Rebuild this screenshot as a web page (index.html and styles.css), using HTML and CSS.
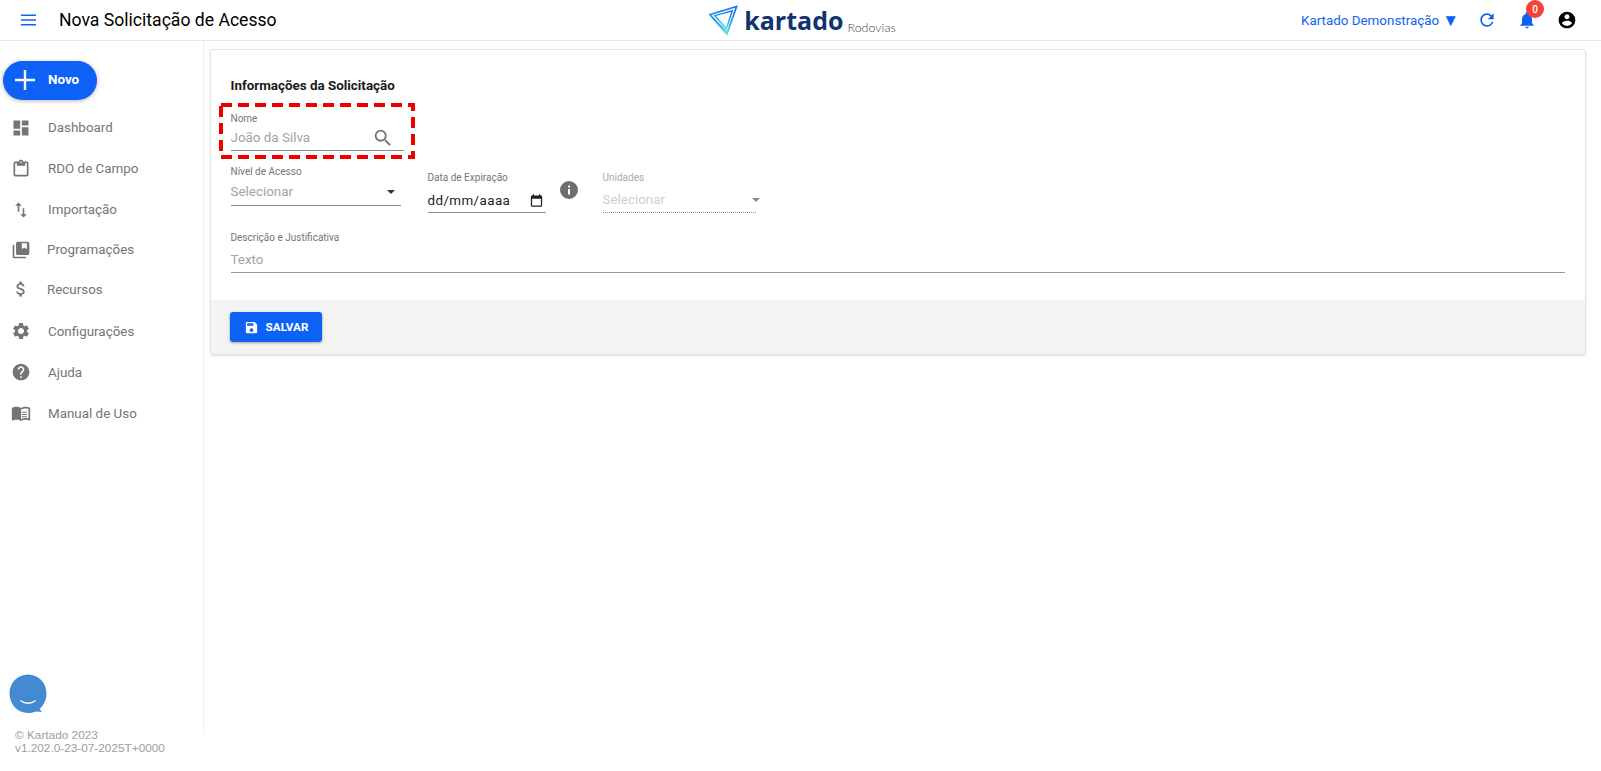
FILE: index.html
```html
<!DOCTYPE html>
<html>
<head>
<title>Nova Solicitação de Acesso</title>
<link rel="stylesheet" href="styles.css">
</head>
<body>
  <div class="topbar">
    <div class="top-left">
      <svg class="burger" viewBox="0 0 16 12"><path d="M0 1h16M0 6h16M0 11h16"/></svg>
      <h1>Nova Solicitação de Acesso</h1>
    </div>
    <div class="logo">
      <svg class="logo-mark" viewBox="0 0 30 30">
        <defs>
          <linearGradient id="lg" x1="0.7" y1="0" x2="0.5" y2="1">
            <stop offset="0" stop-color="#1c78e6"/>
            <stop offset="0.6" stop-color="#30a8ea"/>
            <stop offset="1" stop-color="#5fe6d4"/>
          </linearGradient>
        </defs>
        <path d="M1 9.500 28.500 1 18.500 29.500Z" fill="none" stroke="url(#lg)" stroke-width="1.800"/>
        <path d="M6 10.500 24 5.500 18 24Z" fill="none" stroke="url(#lg)" stroke-width="1.500"/>
        <path d="M3.500 12.500 18.500 27" fill="none" stroke="url(#lg)" stroke-width="1.200"/>
      </svg>
      <span class="logo-name">kartado</span>
      <span class="logo-sub">Rodovias</span>
    </div>
    <div class="top-right">
      <span class="account">Kartado Demonstração <span class="arrow">▼</span></span>
      <svg class="top-icon blue" viewBox="0 0 24 24"><path d="M17.650 6.350A7.958 7.958 0 0 0 12 4c-4.420 0-7.990 3.580-7.990 8s3.570 8 7.990 8c3.730 0 6.840-2.550 7.730-6h-2.080A5.990 5.990 0 0 1 12 18c-3.310 0-6-2.690-6-6s2.690-6 6-6c1.660 0 3.140.69 4.220 1.780L13 11h7V4l-2.350 2.350z"/></svg>
      <div class="bell">
        <svg class="top-icon blue" viewBox="0 0 24 24"><path d="M12 22c1.100 0 2-.9 2-2h-4a2 2 0 0 0 2 2zm6-6v-5c0-3.070-1.640-5.640-4.500-6.320V4a1.500 1.500 0 0 0-3 0v.68C7.630 5.360 6 7.920 6 11v5l-2 2v1h16v-1l-2-2z"/></svg>
        <span class="badge">0</span>
      </div>
      <svg class="top-icon" viewBox="0 0 24 24"><path d="M12 2C6.480 2 2 6.480 2 12s4.480 10 10 10 10-4.480 10-10S17.520 2 12 2zm0 3c1.660 0 3 1.340 3 3s-1.340 3-3 3-3-1.340-3-3 1.340-3 3-3zm0 14.200a7.200 7.200 0 0 1-6-3.220c.03-1.990 4-3.080 6-3.080 1.990 0 5.970 1.090 6 3.080a7.200 7.200 0 0 1-6 3.220z"/></svg>
    </div>
  </div>

  <div class="main">
    <div class="sidebar">
      <div class="nav">
        <button class="novo">
          <svg viewBox="0 0 24 24"><path d="M12 2v20M2 12h20"/></svg>
          <span>Novo</span>
        </button>
        <a class="nav-item">
          <svg viewBox="0 0 24 24"><path d="M3 13h8V3H3v10zm0 8h8v-6H3v6zm10 0h8V11h-8v10zm0-18v6h8V3h-8z"/></svg>
          <span>Dashboard</span>
        </a>
        <a class="nav-item">
          <svg viewBox="0 0 24 24"><path d="M19 3h-4.180C14.400 1.840 13.300 1 12 1s-2.400.84-2.820 2H5c-1.100 0-2 .9-2 2v14c0 1.100.9 2 2 2h14c1.100 0 2-.9 2-2V5c0-1.100-.9-2-2-2zm-7 0c.55 0 1 .45 1 1s-.45 1-1 1-1-.45-1-1 .45-1 1-1zm7 16H5V5h2v3h10V5h2v14z"/></svg>
          <span>RDO de Campo</span>
        </a>
        <a class="nav-item">
          <svg viewBox="0 0 24 24"><path d="M16 17.010V10h-2v7.010h-3L15 21l4-3.990h-3zM9 3 5 6.990h3V14h2V6.990h3L9 3z"/></svg>
          <span>Importação</span>
        </a>
        <a class="nav-item tight">
          <svg viewBox="0 0 24 24"><path d="M4 6H2v14c0 1.100.9 2 2 2h14v-2H4V6zm16-4H8c-1.100 0-2 .9-2 2v12c0 1.100.9 2 2 2h12c1.100 0 2-.9 2-2V4c0-1.100-.9-2-2-2zm-1 9-3-2-3 2V4h6v7z" fill-rule="evenodd"/></svg>
          <span>Programações</span>
        </a>
        <a class="nav-item tight">
          <svg viewBox="0 0 24 24"><path d="M11.800 10.900c-2.270-.59-3-1.200-3-2.150 0-1.090 1.010-1.850 2.700-1.850 1.780 0 2.440.85 2.500 2.100h2.210c-.07-1.720-1.120-3.300-3.210-3.810V3h-3v2.160c-1.940.42-3.500 1.680-3.500 3.610 0 2.310 1.910 3.460 4.700 4.130 2.500.6 3 1.480 3 2.410 0 .69-.49 1.790-2.700 1.790-2.060 0-2.870-.92-2.980-2.100h-2.200c.12 2.190 1.760 3.420 3.680 3.830V21h3v-2.150c1.950-.37 3.500-1.500 3.500-3.550 0-2.840-2.430-3.810-4.700-4.400z"/></svg>
          <span>Recursos</span>
        </a>
        <a class="nav-item">
          <svg viewBox="0 0 24 24"><path d="M19.140 12.940c.04-.3.060-.61.060-.94 0-.32-.02-.64-.07-.94l2.030-1.580a.49.490 0 0 0 .12-.61l-1.920-3.320a.488.488 0 0 0-.59-.22l-2.390.96c-.5-.38-1.030-.7-1.620-.94l-.36-2.540a.484.484 0 0 0-.48-.41h-3.840c-.24 0-.43.170-.47.410l-.36 2.540c-.59.24-1.130.57-1.620.94l-2.390-.96c-.22-.08-.47 0-.59.22L2.740 8.870c-.12.210-.08.47.12.61l2.030 1.580c-.05.3-.09.63-.09.94s.02.64.07.94l-2.030 1.580a.49.490 0 0 0-.12.61l1.920 3.320c.12.220.37.290.59.220l2.390-.96c.5.380 1.030.7 1.620.94l.36 2.540c.05.240.24.410.48.410h3.840c.24 0 .44-.17.47-.41l.36-2.540c.59-.24 1.130-.56 1.620-.94l2.390.96c.22.080.47 0 .59-.22l1.920-3.320c.12-.22.070-.47-.12-.61l-2.010-1.580zM12 15.600A3.610 3.610 0 0 1 8.400 12c0-1.980 1.620-3.600 3.600-3.600s3.600 1.620 3.600 3.600-1.620 3.600-3.600 3.600z"/></svg>
          <span>Configurações</span>
        </a>
        <a class="nav-item">
          <svg viewBox="0 0 24 24"><path d="M12 2C6.480 2 2 6.480 2 12s4.480 10 10 10 10-4.480 10-10S17.520 2 12 2zm1 17h-2v-2h2v2zm2.070-7.750-.9.920C13.450 12.900 13 13.500 13 15h-2v-.5c0-1.100.45-2.100 1.170-2.830l1.240-1.260c.37-.36.590-.86.590-1.410 0-1.100-.9-2-2-2s-2 .9-2 2H8c0-2.210 1.790-4 4-4s4 1.790 4 4c0 .88-.36 1.680-.93 2.250z"/></svg>
          <span>Ajuda</span>
        </a>
        <a class="nav-item">
          <svg viewBox="0 0 24 24"><path d="M21 5c-1.110-.35-2.330-.5-3.500-.5-1.950 0-4.050.4-5.500 1.500-1.450-1.100-3.550-1.500-5.500-1.500S2.450 4.900 1 6v14.650c0 .25.250.5.500.5.100 0 .15-.05.250-.05C3.100 20.450 5.050 20 6.500 20c1.950 0 4.050.4 5.500 1.500 1.350-.85 3.800-1.500 5.500-1.500 1.650 0 3.350.3 4.750 1.050.1.050.15.050.25.050.25 0 .5-.25.5-.5V6c-.6-.45-1.250-.75-2-1zm0 13.500c-1.100-.35-2.300-.5-3.500-.5-1.700 0-4.150.65-5.500 1.500V8c1.350-.85 3.800-1.500 5.500-1.500 1.200 0 2.400.15 3.500.5v11.500zM13 10.500h6v1.200h-6zm0 2.700h6v1.200h-6zm0 2.700h6v1.200h-6z"/></svg>
          <span>Manual de Uso</span>
        </a>
      </div>
      <svg class="chat" viewBox="0 0 38 40">
        <path d="M19 .5C8.500.5.500 8.800.500 19.500S8.500 39 19 39c3.500 0 6-.7 8-1.500l6 .5-2.500-3C35 31 37.500 25.500 37.500 19.500 37.500 8.800 29.500.5 19 .5Z" fill="#448ad3"/>
        <path d="M12 27c4 3 10 3 14 0" fill="none" stroke="#fff" stroke-width="1.500" stroke-linecap="round"/>
      </svg>
    </div>

    <div class="content">
      <div class="card">
        <div class="card-body">
          <h2>Informações da Solicitação</h2>

          <div class="field nome">
            <label>Nome</label>
            <div class="value placeholder">
              <span>João da Silva</span>
              <svg class="search" viewBox="0 0 24 24"><path d="M15.500 14h-.79l-.28-.27A6.471 6.471 0 0 0 16 9.500 6.500 6.500 0 1 0 9.500 16c1.610 0 3.090-.59 4.230-1.570l.27.280v.79l5 4.990L20.490 19l-4.990-5zm-6 0C7.010 14 5 11.990 5 9.500S7.010 5 9.500 5 14 7.010 14 9.500 11.990 14 9.500 14z"/></svg>
            </div>
            <svg class="highlight" viewBox="0 0 196 56"><rect x="2" y="2" width="192" height="52"/></svg>
          </div>

          <div class="row">
            <div class="field nivel">
              <label>Nível de Acesso</label>
              <div class="value placeholder">
                <span>Selecionar</span>
                <i class="caret"></i>
              </div>
            </div>
            <div class="field data">
              <label>Data de Expiração</label>
              <div class="value">
                <span>dd/mm/aaaa</span>
                <svg class="cal" viewBox="0 0 24 24"><path d="M19 4h-1V2h-2v2H8V2H6v2H5a2 2 0 0 0-2 2v14a2 2 0 0 0 2 2h14a2 2 0 0 0 2-2V6a2 2 0 0 0-2-2zm0 16H5V9h14v11z"/></svg>
              </div>
            </div>
            <svg class="info" viewBox="0 0 20 20"><path d="M10 1a9 9 0 1 0 0 18 9 9 0 0 0 0-18zm1 13.500H9V9h2v5.500zM11 7.500H9v-2h2v2z" fill-rule="evenodd"/></svg>
            <div class="field unidades">
              <label>Unidades</label>
              <div class="value placeholder">
                <span>Selecionar</span>
                <i class="caret"></i>
              </div>
            </div>
          </div>

          <div class="field descricao">
            <label>Descrição e Justificativa</label>
            <div class="value placeholder"><span>Texto</span></div>
          </div>
        </div>

        <div class="card-foot">
          <button class="salvar">
            <svg viewBox="0 0 24 24"><path d="M17 3H5a2 2 0 0 0-2 2v14c0 1.100.9 2 2 2h14c1.100 0 2-.9 2-2V7l-4-4zm-5 16c-1.660 0-3-1.340-3-3s1.340-3 3-3 3 1.340 3 3-1.340 3-3 3zm3-10H5V5h10v4z"/></svg>
            <span>SALVAR</span>
          </button>
        </div>
      </div>
    </div>
  </div>

  <div class="version">© Kartado 2023<br>v1.202.0-23-07-2025T+0000</div>
</body>
</html>
```

FILE: styles.css
```css
* {
  box-sizing: border-box;
}

html, body {
  height: 771px;
  overflow: hidden;
}

body {
  margin: 0;
  background: #fff;
  font-family: Roboto, sans-serif;
  color: #000;
}

/* Top bar */
.topbar {
  height: 41px;
  border-bottom: 1px solid #e6e6e6;
  display: grid;
  grid-template-columns: 1fr auto 1fr;
  align-items: center;
}

.top-left {
  display: flex;
  align-items: center;
  padding-left: 21px;
}

.burger {
  width: 15px;
  height: 12px;
  stroke: #0d62f5;
  stroke-width: 1.500;
  fill: none;
  margin-right: 23px;
}

.top-left h1 {
  margin: 0;
  font-size: 17.600px;
  font-weight: 400;
}

.logo {
  display: flex;
  align-items: flex-end;
  margin-left: 4px;
}

.logo-mark {
  width: 29px;
  height: 30px;
  margin-right: 6px;
}

.logo-name {
  font-family: "Open Sans", sans-serif;
  font-weight: 700;
  font-size: 25px;
  line-height: 30px;
  color: #10346e;
}

.logo-sub {
  font-family: Lato, sans-serif;
  font-weight: 300;
  font-size: 12.500px;
  line-height: 14px;
  color: #444;
  margin-left: 4px;
}

.top-right {
  display: flex;
  align-items: center;
  justify-content: flex-end;
  padding-right: 24px;
}

.account {
  color: #0d62f5;
  font-size: 13.400px;
  margin-right: 18px;
  display: flex;
  align-items: center;
  gap: 3px;
}

.arrow {
  font-size: 17px;
  line-height: 14px;
}

.top-icon {
  width: 20px;
  height: 20px;
  display: block;
}

.top-icon.blue {
  fill: #0d62f5;
}

.bell {
  position: relative;
  margin: 0 20px 0 20px;
}

.badge {
  position: absolute;
  top: -10px;
  left: 9px;
  width: 18px;
  height: 18px;
  border-radius: 50%;
  background: #f44336;
  color: #fff;
  font-size: 10px;
  font-weight: 500;
  display: flex;
  align-items: center;
  justify-content: center;
}

/* Main area */
.main {
  display: flex;
  height: 693px;
}

.sidebar {
  width: 204px;
  border-right: 1px solid #efefef;
  display: flex;
  flex-direction: column;
  justify-content: space-between;
}

.nav {
  padding-top: 20px;
}

.novo {
  width: 94px;
  height: 39px;
  margin: 0 0 7px 3px;
  border: 0;
  border-radius: 20px;
  background: #0d62f5;
  box-shadow: 0 1px 4px rgba(0,0,0,0.3);
  color: #fff;
  font-family: Roboto, sans-serif;
  font-size: 13.400px;
  font-weight: 700;
  display: flex;
  align-items: center;
  padding: 0 0 2px 10px;
}

.novo span {
  margin-left: 1px;
}

.novo svg {
  width: 24px;
  height: 24px;
  stroke: #fff;
  stroke-width: 2.400;
  fill: none;
  margin-right: 10px;
}

.nav-item {
  display: flex;
  align-items: center;
  height: 41px;
  padding-left: 11px;
  color: #757575;
  font-size: 13.400px;
}

.nav-item.tight {
  height: 39.500px;
}

.nav-item.tight + .nav-item:not(.tight) {
  margin-top: 1.500px;
}

.nav-item svg {
  width: 20px;
  height: 20px;
  fill: #757575;
  margin-right: 17px;
}

.nav-item.tight span {
  margin-left: -1px;
}

.chat {
  width: 38px;
  height: 40px;
  margin: 0 0 20px 9px;
  display: block;
}

.content {
  flex: 1;
  padding: 8px 15px 0 6px;
}

.card {
  border: 1px solid #e3e3e3;
  border-radius: 3px;
  box-shadow: 0 1px 2px rgba(0,0,0,0.12);
  background: #fff;
}

.card-body {
  padding: 28px 20px 27px 19.500px;
}

.card-body h2 {
  margin: 0;
  font-size: 13.400px;
  font-weight: 700;
  line-height: 16px;
  color: #1a1a1a;
}

/* Form fields */
.field {
  position: relative;
}

.field label {
  display: block;
  font-size: 10px;
  line-height: 12px;
  color: #757575;
}

.value {
  display: flex;
  align-items: center;
  justify-content: space-between;
  height: 26px;
  font-size: 13.400px;
  border-bottom: 1px solid #8c8c8c;
}

.placeholder {
  color: #a3a3a3;
}

.nome {
  width: 173px;
  margin-top: 19px;
}

.highlight {
  position: absolute;
  left: -12px;
  top: -10px;
  width: 196px;
  height: 56px;
  fill: none;
  stroke: #ee0000;
  stroke-width: 4;
  stroke-dasharray: 11 6;
}

.search {
  width: 22px;
  height: 22px;
  fill: #757575;
  margin-right: 10px;
}

.row {
  display: flex;
  align-items: flex-start;
  margin-top: 15px;
}

.nivel {
  width: 170px;
}

.nivel .value {
  height: 28px;
}

.data {
  width: 118px;
  margin: 6px 0 0 27px;
}

.data .value {
  color: #212121;
  letter-spacing: 0.4px;
  height: 29px;
  padding: 4px 2px 0 0;
}

.cal {
  width: 15px;
  height: 15px;
  fill: #212121;
}

.info {
  width: 20px;
  height: 20px;
  fill: #6e6e6e;
  margin: 14px 0 0 13px;
}

.unidades {
  width: 153px;
  margin: 6px 0 0 24px;
}

.unidades label {
  color: #a8a8a8;
}

.unidades .value {
  height: 29px;
  padding-top: 3px;
  color: #cfcfcf;
  border-bottom: 1px dotted #8c8c8c;
}

.caret {
  width: 0;
  height: 0;
  border-left: 4.500px solid transparent;
  border-right: 4.500px solid transparent;
  border-top: 4.500px solid #333;
  margin-right: 6px;
}

.unidades .caret {
  border-top-color: #8c8c8c;
  margin-right: -4px;
}

.descricao {
  margin-top: 19px;
}

.descricao .value {
  height: 29px;
  padding-top: 2px;
  border-bottom: 1px solid #999;
}

.card-foot {
  background: #f4f4f4;
  height: 54px;
  padding: 12px 0 0 19px;
}

.salvar {
  width: 92px;
  height: 30px;
  border: 0;
  border-radius: 3px;
  background: #0d62f5;
  box-shadow: 0 1px 3px rgba(0,0,0,0.35);
  color: #fff;
  font-family: Roboto, sans-serif;
  font-size: 11.700px;
  font-weight: 700;
  display: flex;
  align-items: center;
  justify-content: center;
  gap: 7px;
  padding: 0;
}

.salvar svg {
  width: 15px;
  height: 15px;
  fill: #fff;
}

.version {
  font-family: "Liberation Sans", sans-serif;
  font-size: 11.800px;
  line-height: 13px;
  color: #9e9e9e;
  margin-top: -5px;
  padding-left: 15px;
}
```
